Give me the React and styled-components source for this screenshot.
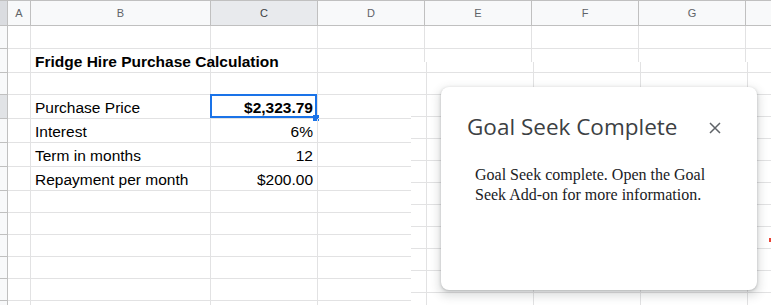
import React from 'react';
import styled, { createGlobalStyle } from 'styled-components';

// the column after G is scrolled mostly out of view, so its letter is not shown
const COLS = ['A', 'B', 'C', 'D', 'E', 'F', 'G', ''];
const WIDTHS = '8px 23px 180px 107px 107px 107px 107px 107px 107px';
const ROWS = [23, 24, 22, 24, 24, 24, 24, 22, 22, 22, 22, 22, 22];

const DATA = {
  2: { b: 'Fridge Hire Purchase Calculation', bold: true },
  4: { b: 'Purchase Price', c: '$2,323.79', strong: true, selected: true },
  5: { b: 'Interest', c: '6%' },
  6: { b: 'Term in months', c: '12' },
  7: { b: 'Repayment per month', c: '$200.00' },
};

function App() {
  return (
    <>
      <GlobalStyle />
      <Page>
        <Sheet>
          <Corner />
          {COLS.map((c, i) => (
            <ColHead key={i} active={c === 'C'}>
              {c}
            </ColHead>
          ))}
          {ROWS.map((h, i) => {
            const n = i + 1;
            const row = DATA[n] || {};
            return (
              <React.Fragment key={n}>
                <RowHead h={h} active={row.selected} />
                <Cell h={h} />
                <Cell h={h}>
                  {row.b && <Label bold={row.bold}>{row.b}</Label>}
                </Cell>
                <Cell h={h} right selected={row.selected}>
                  {row.c && <Label bold={row.strong}>{row.c}</Label>}
                </Cell>
                <Cell h={h} />
                <Cell h={h} />
                <Cell h={h} />
                <Cell h={h} />
                <Cell h={h} />
              </React.Fragment>
            );
          })}
        </Sheet>

        <Backdrop>
          <CommentMark />
        </Backdrop>

        <Dialog>
          <DialogHead>
            <Title>Goal Seek Complete</Title>
            <Close aria-label="Close">
              <svg width="12" height="12" viewBox="0 0 12 12">
                <path
                  d="M1 1L11 11M11 1L1 11"
                  stroke="#5f6368"
                  strokeWidth="1.5"
                  fill="none"
                />
              </svg>
            </Close>
          </DialogHead>
          <Body>
            Goal Seek complete. Open the Goal Seek Add-on for more information.
          </Body>
        </Dialog>
      </Page>
    </>
  );
}
export default App;

const GlobalStyle = createGlobalStyle`
  html, body {
    margin: 0;
    padding: 0;
    background: #fff;
    overflow: hidden;
  }
  * {
    box-sizing: border-box;
  }
`;

const Page = styled.div`
  position: relative;
  width: 771px;
  height: 305px;
  overflow: hidden;
  font-family: 'Liberation Sans', Arial, sans-serif;
`;

const Sheet = styled.div`
  display: grid;
  grid-template-columns: ${WIDTHS};
  width: max-content;
  border-top: 1px solid #c0c0c0;
`;

const Corner = styled.div`
  height: 25px;
  background: #dadce0;
  border-right: 1px solid #c0c0c0;
  border-bottom: 1px solid #c0c0c0;
`;

const ColHead = styled.div`
  height: 25px;
  display: flex;
  align-items: center;
  justify-content: center;
  font-size: 11px;
  color: ${(p) => (p.active ? '#3c4043' : '#5f6368')};
  background: ${(p) => (p.active ? '#e8eaed' : '#f8f9fa')};
  border-right: 1px solid #c0c0c0;
  border-bottom: 1px solid #c0c0c0;
`;

const RowHead = styled.div`
  height: ${(p) => p.h}px;
  background: ${(p) => (p.active ? '#e1e3e6' : '#f8f9fa')};
  border-right: 1px solid #c0c0c0;
  border-bottom: 1px solid #c0c0c0;
`;

const Cell = styled.div`
  position: relative;
  height: ${(p) => p.h}px;
  display: flex;
  align-items: flex-end;
  justify-content: ${(p) => (p.right ? 'flex-end' : 'flex-start')};
  padding: 0 4px 2px 4px;
  border-right: 1px solid #e2e2e3;
  border-bottom: 1px solid #e2e2e3;
  ${(p) =>
    p.selected &&
    `
    &::before {
      content: '';
      position: absolute;
      left: -1px;
      top: -1px;
      right: 0;
      bottom: 0;
      border: 2px solid #1a73e8;
    }
    &::after {
      content: '';
      position: absolute;
      right: -2px;
      bottom: -3px;
      width: 6px;
      height: 6px;
      background: #1a73e8;
    }
  `}
`;

const Label = styled.span`
  font-size: 15.5px;
  line-height: 17px;
  color: #000;
  white-space: nowrap;
  font-weight: ${(p) => (p.bold ? 700 : 400)};
`;

const Backdrop = styled.div`
  position: absolute;
  left: 411px;
  top: 62px;
  right: 0;
  bottom: 0;
  background-color: #fff;
  background-image: repeating-linear-gradient(
      to bottom,
      transparent 0,
      transparent 10px,
      #e2e2e3 10px,
      #e2e2e3 11px,
      transparent 11px,
      transparent 22px
    ),
    repeating-linear-gradient(
      to right,
      transparent 0,
      transparent 15px,
      #e2e2e3 15px,
      #e2e2e3 16px,
      transparent 16px,
      transparent 107px
    );
  background-size: 100% 22px, 107px 100%;
  background-repeat: repeat;
`;

const CommentMark = styled.span`
  position: absolute;
  right: 0;
  top: 176px;
  width: 2px;
  height: 4px;
  background: #ea4335;
`;

const Dialog = styled.div`
  position: absolute;
  left: 441px;
  top: 87px;
  width: 316px;
  height: 203px;
  background: #fff;
  border-radius: 8px;
  box-shadow: 0 1px 3px rgba(60, 64, 67, 0.3),
    0 4px 8px 3px rgba(60, 64, 67, 0.15);
  padding: 25px 36px 0 26px;
`;

const DialogHead = styled.div`
  display: flex;
  align-items: center;
  justify-content: space-between;
`;

const Title = styled.h2`
  margin: 0;
  font-family: 'Open Sans', Roboto, sans-serif;
  font-size: 22.5px;
  line-height: 30px;
  font-weight: 400;
  color: #3c4043;
`;

const Close = styled.span`
  display: flex;
  width: 12px;
  height: 12px;
  margin-top: 2px;
`;

const Body = styled.p`
  margin: 23px 0 0 8px;
  font-family: 'Liberation Serif', 'Times New Roman', serif;
  font-size: 16px;
  line-height: 20px;
  color: #202124;
`;
